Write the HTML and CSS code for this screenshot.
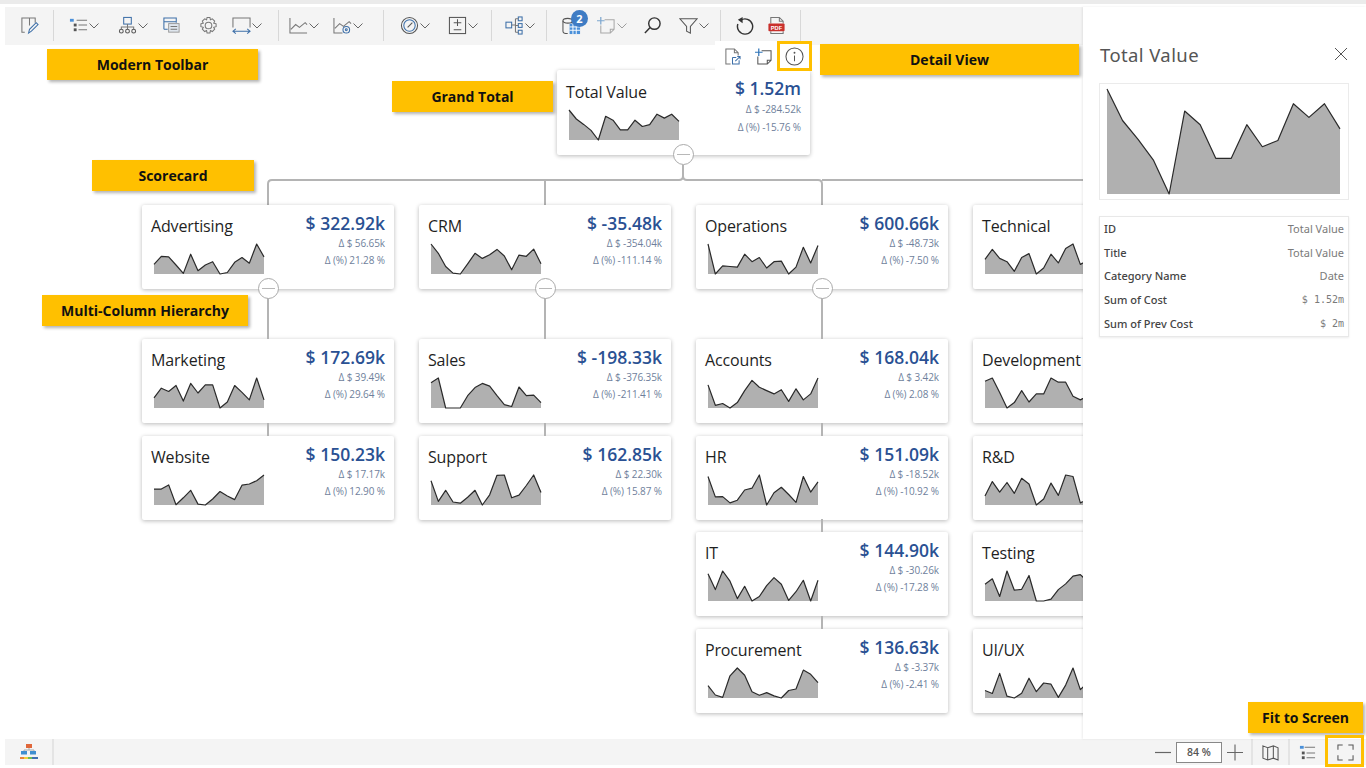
FILE: index.html
```html
<!DOCTYPE html>
<html lang="en">
<head>
<meta charset="utf-8">
<title>Scorecard Hierarchy</title>
<link rel="stylesheet" href="styles.css">
</head>
<body>
<div class="app">
  <div class="topstrip"></div>
  <div class="workspace">
    <div class="left">
      <div class="toolbar">
        <div class="tgroup g1">
          <span class="tool"><svg class="ic" viewBox="0 0 20 20"><path class="gr" d="M5 17H2V2h14v5M10 2v8"/><path class="bl" d="M9 18l1-4 7-7 2 2-7 7z"/></svg></span>
        </div>
        <div class="tgroup g2">
          <span class="tool w49"><svg class="ic" viewBox="0 0 20 20"><rect x="1" y="3" width="4" height="3" fill="#4a90d9"/><rect x="5" y="8" width="3" height="3" fill="#555"/><rect x="5" y="13" width="3" height="3" fill="#555"/><path class="gr" d="M8 4.500h11M10 9.500h9M10 14.500h9"/></svg><svg class="chev" viewBox="0 0 10 6"><path d="M.5.500 5 5 9.500.5"/></svg></span>
          <span class="tool w44"><svg class="ic" viewBox="0 0 20 20"><rect class="bl" x="6" y="1.500" width="8" height="7"/><path class="gr" d="M10 8.500v3M3.500 14v-2.500h13V14M10 11.500V14"/><circle class="dk" cx="3.500" cy="16" r="2"/><circle class="dk" cx="10" cy="16" r="2"/><circle class="dk" cx="16.500" cy="16" r="2"/></svg><svg class="chev" viewBox="0 0 10 6"><path d="M.5.500 5 5 9.500.5"/></svg></span>
          <span class="tool w37"><svg class="ic" viewBox="0 0 20 20"><path class="bl" d="M2 14V2h13v5M2 6h13M6 14H2"/><rect x="7" y="8" width="11" height="9" fill="#dfe6ee" stroke="#999"/><path class="gr" d="M9 11h7M9 14h7"/></svg></span>
          <span class="tool w33"><svg class="ic" viewBox="0 0 20 20"><circle class="gr" cx="10" cy="10" r="3.500"/><path class="gr" d="M8.500 1.500h3l.5 2.500 2-1 2.500 2.500-1 2 2.500.7v3l-2.500.7 1 2-2.500 2.500-2-1-.5 2.500h-3l-.5-2.500-2 1-2.500-2.500 1-2-2.500-.7v-3l2.500-.7-1-2L6 3l2 1z"/></svg></span>
          <span class="tool"><svg class="ic" viewBox="0 0 20 20"><path class="gr" d="M1 12V2h18v10"/><path class="bl" d="M1 16h18M4 13.500 1 16l3 2.500M16 13.500l3 2.500-3 2.500"/></svg><svg class="chev" viewBox="0 0 10 6"><path d="M.5.500 5 5 9.500.5"/></svg></span>
        </div>
        <div class="tgroup g3">
          <span class="tool w44b"><svg class="ic" viewBox="0 0 20 20"><path class="gr" d="M1 2v16h18M2 14l5-5 4 3 6-5 2 2"/></svg><svg class="chev" viewBox="0 0 10 6"><path d="M.5.500 5 5 9.500.5"/></svg></span>
          <span class="tool"><svg class="ic" viewBox="0 0 20 20"><path class="gr" d="M1 2v16h9M2 13l5-5 4 3 6-5 2 2"/><circle class="bl" cx="14" cy="14.500" r="3.500"/><circle class="bl" cx="14" cy="14.500" r="1"/></svg><svg class="chev" viewBox="0 0 10 6"><path d="M.5.500 5 5 9.500.5"/></svg></span>
        </div>
        <div class="tgroup g4">
          <span class="tool w48"><svg class="ic" viewBox="0 0 20 20"><circle class="dk" cx="10" cy="10" r="8.500"/><circle class="bl" cx="10" cy="10" r="6"/><path class="dk" d="M8 12l5-5"/></svg><svg class="chev" viewBox="0 0 10 6"><path d="M.5.500 5 5 9.500.5"/></svg></span>
          <span class="tool"><svg class="ic" viewBox="0 0 20 20"><rect class="dk" x="1.500" y="1.500" width="17" height="17"/><path class="dk" d="M6 7h8M10 3.500v7M6 14.500h8"/></svg><svg class="chev" viewBox="0 0 10 6"><path d="M.5.500 5 5 9.500.5"/></svg></span>
        </div>
        <div class="tgroup g5">
          <span class="tool"><svg class="ic" viewBox="0 0 20 20"><rect class="bl" x="1" y="6.500" width="6" height="6"/><rect class="bl" x="14" y="1" width="4" height="4"/><rect class="bl" x="14" y="8" width="4" height="4"/><rect class="bl" x="14" y="15" width="4" height="4"/><path class="gr" d="M7 9.500h4M11 3v14M11 3h3M11 10h3M11 17h3"/></svg><svg class="chev" viewBox="0 0 10 6"><path d="M.5.500 5 5 9.500.5"/></svg></span>
        </div>
        <div class="tgroup g6">
          <span class="tool w35"><svg class="ic" viewBox="0 0 20 20"><ellipse class="dk" cx="6" cy="5" rx="5" ry="2.500"/><path class="dk" d="M1 5v11c0 1.500 2 2.500 5 2.500M11 5v3"/><rect x="8" y="8" width="11" height="11" fill="#4a90d9"/><path d="M8 11.500h11M8 15h11M11.500 8v11M15 8v11" stroke="#fff" stroke-width="1"/></svg></span>
          <span class="tool w48c muted"><svg class="ic" viewBox="0 0 20 20"><path class="gr" d="M8 4h10v10l-4 4H4V10M18 14h-4v4"/><path class="plus" d="M0 5h8M4 1v8"/></svg><svg class="chev" viewBox="0 0 10 6"><path d="M.5.500 5 5 9.500.5"/></svg></span>
          <span class="tool w34"><svg class="ic" viewBox="0 0 20 20"><circle class="dkb" cx="12" cy="8" r="6"/><path class="dkb" d="M7.500 12 2 18"/></svg></span>
          <span class="tool"><svg class="ic" viewBox="0 0 20 20"><path class="dk" d="M1 3h18l-7 8v7l-4-2v-5z"/></svg><svg class="chev" viewBox="0 0 10 6"><path d="M.5.500 5 5 9.500.5"/></svg></span>
        </div>
        <div class="tgroup g7">
          <span class="tool w32"><svg class="ic" viewBox="0 0 20 20"><path class="dkb" d="M6 4.500a8 8 0 1 1-3 4"/><path class="dkf" d="M8 1v6.500L3 4z"/></svg></span>
          <span class="tool"><svg class="ic" viewBox="0 0 20 20"><path class="gr" d="M4 8V1.500h9l4 4V8M13 1.500v4h4M4 16v2.500h13V16"/><rect x="1.500" y="8" width="17" height="8" rx="1" fill="#c9302c"/><text class="pdf" x="10" y="14.300">PDF</text></svg></span>
        </div>
      </div>

      <div class="canvas">
        <svg class="links" viewBox="0 0 1083 160"><path d="M683 120v11q0 4-4 4H272q-4 0-4 4v21M683 131q0 4 4 4h131q4 0 4 4v21M545 135q0 0 0 4v21M822 135h261"/></svg>

        <div class="card grand">
          <div class="lhs">
            <div class="name">Total Value</div>
            <svg class="spark" viewBox="0 0 150 100" preserveAspectRatio="none"><polygon class="area" points="0,100 0,0 10,30 20,48 30,68 40,100 50,21 60,34 70,66 80,66 90,34 100,55 110,49 120,14 130,27 140,14 150,38 150,100"/><polyline class="line" points="0,0 10,30 20,48 30,68 40,100 50,21 60,34 70,66 80,66 90,34 100,55 110,49 120,14 130,27 140,14 150,38"/></svg>
          </div>
          <div class="rhs">
            <div class="val">$ 1.52m</div>
            <div class="sub">Δ $ -284.52k</div>
            <div class="sub">Δ (%) -15.76 %</div>
          </div>
          <span class="toggle"></span>
        </div>

        <div class="branches">
          <div class="column">
            <div class="card">
              <div class="lhs"><div class="name">Advertising</div>
                <svg class="spark" viewBox="0 0 150 100" preserveAspectRatio="none"><polygon class="area" points="0,100 0,68 10,41 20,43 30,70 40,98 50,34 60,89 70,70 80,59 90,100 100,95 110,61 120,45 130,64 140,0 150,43 150,100"/><polyline class="line" points="0,68 10,41 20,43 30,70 40,98 50,34 60,89 70,70 80,59 90,100 100,95 110,61 120,45 130,64 140,0 150,43"/></svg></div>
              <div class="rhs"><div class="val">$ 322.92k</div><div class="sub">Δ $ 56.65k</div><div class="sub">Δ (%) 21.28 %</div></div>
              <span class="toggle"></span>
            </div>
            <div class="children">
              <div class="card linked">
                <div class="lhs"><div class="name">Marketing</div>
                  <svg class="spark" viewBox="0 0 150 100" preserveAspectRatio="none"><polygon class="area" points="0,100 0,66 10,34 20,45 30,25 40,77 50,18 60,50 70,23 80,23 90,100 100,80 110,25 120,48 130,73 140,0 150,73 150,100"/><polyline class="line" points="0,66 10,34 20,45 30,25 40,77 50,18 60,50 70,23 80,23 90,100 100,80 110,25 120,48 130,73 140,0 150,73"/></svg></div>
                <div class="rhs"><div class="val">$ 172.69k</div><div class="sub">Δ $ 39.49k</div><div class="sub">Δ (%) 29.64 %</div></div>
              </div>
              <div class="card linked">
                <div class="lhs"><div class="name">Website</div>
                  <svg class="spark" viewBox="0 0 150 100" preserveAspectRatio="none"><polygon class="area" points="0,100 0,47 10,47 20,33 30,99 40,76 50,51 60,97 70,100 80,80 90,55 100,70 110,82 120,34 130,30 140,19 150,0 150,100"/><polyline class="line" points="0,47 10,47 20,33 30,99 40,76 50,51 60,97 70,100 80,80 90,55 100,70 110,82 120,34 130,30 140,19 150,0"/></svg></div>
                <div class="rhs"><div class="val">$ 150.23k</div><div class="sub">Δ $ 17.17k</div><div class="sub">Δ (%) 12.90 %</div></div>
              </div>
            </div>
          </div>

          <div class="column">
            <div class="card">
              <div class="lhs"><div class="name">CRM</div>
                <svg class="spark" viewBox="0 0 150 100" preserveAspectRatio="none"><polygon class="area" points="0,100 0,0 10,31 20,75 30,97 40,100 50,66 60,31 70,48 80,36 90,18 100,40 110,86 120,37 130,41 140,17 150,66 150,100"/><polyline class="line" points="0,0 10,31 20,75 30,97 40,100 50,66 60,31 70,48 80,36 90,18 100,40 110,86 120,37 130,41 140,17 150,66"/></svg></div>
              <div class="rhs"><div class="val">$ -35.48k</div><div class="sub">Δ $ -354.04k</div><div class="sub">Δ (%) -111.14 %</div></div>
              <span class="toggle"></span>
            </div>
            <div class="children">
              <div class="card linked">
                <div class="lhs"><div class="name">Sales</div>
                  <svg class="spark" viewBox="0 0 150 100" preserveAspectRatio="none"><polygon class="area" points="0,100 0,16 10,0 20,100 30,100 40,100 50,59 60,32 70,18 80,27 90,59 100,89 110,95 120,30 130,59 140,57 150,82 150,100"/><polyline class="line" points="0,16 10,0 20,100 30,100 40,100 50,59 60,32 70,18 80,27 90,59 100,89 110,95 120,30 130,59 140,57 150,82"/></svg></div>
                <div class="rhs"><div class="val">$ -198.33k</div><div class="sub">Δ $ -376.35k</div><div class="sub">Δ (%) -211.41 %</div></div>
              </div>
              <div class="card linked">
                <div class="lhs"><div class="name">Support</div>
                  <svg class="spark" viewBox="0 0 150 100" preserveAspectRatio="none"><polygon class="area" points="0,100 0,19 10,88 20,51 30,90 40,94 50,74 60,51 70,100 80,66 90,1 100,0 110,76 120,67 130,35 140,0 150,58 150,100"/><polyline class="line" points="0,19 10,88 20,51 30,90 40,94 50,74 60,51 70,100 80,66 90,1 100,0 110,76 120,67 130,35 140,0 150,58"/></svg></div>
                <div class="rhs"><div class="val">$ 162.85k</div><div class="sub">Δ $ 22.30k</div><div class="sub">Δ (%) 15.87 %</div></div>
              </div>
            </div>
          </div>

          <div class="column">
            <div class="card">
              <div class="lhs"><div class="name">Operations</div>
                <svg class="spark" viewBox="0 0 150 100" preserveAspectRatio="none"><polygon class="area" points="0,100 0,0 10,100 20,73 30,75 40,77 50,34 60,59 70,45 80,80 90,59 100,57 110,100 120,77 130,11 140,63 150,5 150,100"/><polyline class="line" points="0,0 10,100 20,73 30,75 40,77 50,34 60,59 70,45 80,80 90,59 100,57 110,100 120,77 130,11 140,63 150,5"/></svg></div>
              <div class="rhs"><div class="val">$ 600.66k</div><div class="sub">Δ $ -48.73k</div><div class="sub">Δ (%) -7.50 %</div></div>
              <span class="toggle"></span>
            </div>
            <div class="children">
              <div class="card linked">
                <div class="lhs"><div class="name">Accounts</div>
                  <svg class="spark" viewBox="0 0 150 100" preserveAspectRatio="none"><polygon class="area" points="0,100 0,23 10,91 20,85 30,100 40,82 50,42 60,8 70,31 80,42 90,53 100,39 110,78 120,36 130,73 140,53 150,0 150,100"/><polyline class="line" points="0,23 10,91 20,85 30,100 40,82 50,42 60,8 70,31 80,42 90,53 100,39 110,78 120,36 130,73 140,53 150,0"/></svg></div>
                <div class="rhs"><div class="val">$ 168.04k</div><div class="sub">Δ $ 3.42k</div><div class="sub">Δ (%) 2.08 %</div></div>
              </div>
              <div class="card linked">
                <div class="lhs"><div class="name">HR</div>
                  <svg class="spark" viewBox="0 0 150 100" preserveAspectRatio="none"><polygon class="area" points="0,100 0,5 10,73 20,72 30,93 40,84 50,50 60,44 70,0 80,100 90,59 100,41 110,65 120,91 130,5 140,57 150,23 150,100"/><polyline class="line" points="0,5 10,73 20,72 30,93 40,84 50,50 60,44 70,0 80,100 90,59 100,41 110,65 120,91 130,5 140,57 150,23"/></svg></div>
                <div class="rhs"><div class="val">$ 151.09k</div><div class="sub">Δ $ -18.52k</div><div class="sub">Δ (%) -10.92 %</div></div>
              </div>
              <div class="card linked">
                <div class="lhs"><div class="name">IT</div>
                  <svg class="spark" viewBox="0 0 150 100" preserveAspectRatio="none"><polygon class="area" points="0,100 0,9 10,62 20,0 30,34 40,92 50,51 60,100 70,85 80,49 90,22 100,44 110,98 120,69 130,31 140,100 150,31 150,100"/><polyline class="line" points="0,9 10,62 20,0 30,34 40,92 50,51 60,100 70,85 80,49 90,22 100,44 110,98 120,69 130,31 140,100 150,31"/></svg></div>
                <div class="rhs"><div class="val">$ 144.90k</div><div class="sub">Δ $ -30.26k</div><div class="sub">Δ (%) -17.28 %</div></div>
              </div>
              <div class="card linked">
                <div class="lhs"><div class="name">Procurement</div>
                  <svg class="spark" viewBox="0 0 150 100" preserveAspectRatio="none"><polygon class="area" points="0,100 0,59 10,90 20,98 30,26 40,0 50,24 60,79 70,91 80,82 90,93 100,100 110,75 120,70 130,7 140,21 150,49 150,100"/><polyline class="line" points="0,59 10,90 20,98 30,26 40,0 50,24 60,79 70,91 80,82 90,93 100,100 110,75 120,70 130,7 140,21 150,49"/></svg></div>
                <div class="rhs"><div class="val">$ 136.63k</div><div class="sub">Δ $ -3.37k</div><div class="sub">Δ (%) -2.41 %</div></div>
              </div>
            </div>
          </div>

          <div class="column">
            <div class="card">
              <div class="lhs"><div class="name">Technical</div>
                <svg class="spark" viewBox="0 0 150 100" preserveAspectRatio="none"><polygon class="area" points="0,100 0,51 10,18 20,48 30,59 40,91 50,45 60,32 70,100 80,80 90,34 100,63 110,15 120,0 130,68 140,55 150,40 150,100"/><polyline class="line" points="0,51 10,18 20,48 30,59 40,91 50,45 60,32 70,100 80,80 90,34 100,63 110,15 120,0 130,68 140,55 150,40"/></svg></div>
              <span class="toggle"></span>
            </div>
            <div class="children">
              <div class="card linked">
                <div class="lhs"><div class="name">Development</div>
                  <svg class="spark" viewBox="0 0 150 100" preserveAspectRatio="none"><polygon class="area" points="0,100 0,11 10,0 20,48 30,100 40,82 50,42 60,80 70,53 80,53 90,0 100,14 110,14 120,61 130,73 140,60 150,50 150,100"/><polyline class="line" points="0,11 10,0 20,48 30,100 40,82 50,42 60,80 70,53 80,53 90,0 100,14 110,14 120,61 130,73 140,60 150,50"/></svg></div>
              </div>
              <div class="card linked">
                <div class="lhs"><div class="name">R&amp;D</div>
                  <svg class="spark" viewBox="0 0 150 100" preserveAspectRatio="none"><polygon class="area" points="0,100 0,70 10,22 20,57 30,25 40,61 50,11 60,30 70,100 80,80 90,27 100,68 110,0 120,5 130,93 140,82 150,60 150,100"/><polyline class="line" points="0,70 10,22 20,57 30,25 40,61 50,11 60,30 70,100 80,80 90,27 100,68 110,0 120,5 130,93 140,82 150,60"/></svg></div>
              </div>
              <div class="card linked">
                <div class="lhs"><div class="name">Testing</div>
                  <svg class="spark" viewBox="0 0 150 100" preserveAspectRatio="none"><polygon class="area" points="0,100 0,44 10,26 20,85 30,0 40,64 50,61 60,15 70,100 80,100 90,94 100,62 110,43 120,17 130,12 140,35 150,50 150,100"/><polyline class="line" points="0,44 10,26 20,85 30,0 40,64 50,61 60,15 70,100 80,100 90,94 100,62 110,43 120,17 130,12 140,35 150,50"/></svg></div>
              </div>
              <div class="card linked">
                <div class="lhs"><div class="name">UI/UX</div>
                  <svg class="spark" viewBox="0 0 150 100" preserveAspectRatio="none"><polygon class="area" points="0,100 0,75 10,85 20,18 30,94 40,100 50,84 60,34 70,79 80,50 90,54 100,98 110,57 120,0 130,72 140,49 150,61 150,100"/><polyline class="line" points="0,75 10,85 20,18 30,94 40,100 50,84 60,34 70,79 80,50 90,54 100,98 110,57 120,0 130,72 140,49 150,61"/></svg></div>
              </div>
            </div>
          </div>
        </div>
      </div>
    </div>

    <aside class="panel">
      <div class="panel-head">
        <span class="panel-title">Total Value</span>
        <svg class="close" viewBox="0 0 14 14"><path d="M1 1l12 12M13 1 1 13"/></svg>
      </div>
      <div class="panel-chart">
        <svg class="bigspark" viewBox="0 0 150 100" preserveAspectRatio="none"><polygon class="area" points="0,100 0,0 10,30 20,48 30,68 40,100 50,21 60,34 70,66 80,66 90,34 100,55 110,49 120,14 130,27 140,14 150,38 150,100"/><polyline class="line" points="0,0 10,30 20,48 30,68 40,100 50,21 60,34 70,66 80,66 90,34 100,55 110,49 120,14 130,27 140,14 150,38"/></svg>
      </div>
      <div class="panel-table">
        <div class="prow"><span class="pk">ID</span><span class="pv">Total Value</span></div>
        <div class="prow"><span class="pk">Title</span><span class="pv">Total Value</span></div>
        <div class="prow"><span class="pk">Category Name</span><span class="pv">Date</span></div>
        <div class="prow"><span class="pk">Sum of Cost</span><span class="pv mono">$ 1.52m</span></div>
        <div class="prow"><span class="pk">Sum of Prev Cost</span><span class="pv mono">$ 2m</span></div>
      </div>
    </aside>
  </div>

  <div class="statusbar">
    <div class="scell logo">
      <svg class="logoic" viewBox="0 0 18 16"><rect x="6" y="0" width="6" height="4" fill="#e0673a"/><path d="M9 4v2M4 8V6h10v2" stroke="#aaa" fill="none"/><rect x="1" y="7" width="6" height="3.500" fill="#3f8fd0"/><rect x="10" y="7" width="6" height="3.500" fill="#3f8fd0"/><rect x="0" y="13" width="4" height="2" fill="#e8823a"/><rect x="4" y="13" width="4" height="2" fill="#f2cf3b"/><rect x="8" y="13" width="4" height="2" fill="#6dbb54"/><rect x="12" y="13" width="6" height="2" fill="#3f6fb0"/></svg>
    </div>
    <div class="sspacer"></div>
    <div class="zoom">
      <svg class="zi minus" viewBox="0 0 16 17"><path d="M0 8.500h16"/></svg>
      <span class="zoombox">84 %</span>
      <svg class="zi plusz" viewBox="0 0 17 17"><path d="M0 8.500h17M8.500 0v17"/></svg>
    </div>
    <div class="scell map"><svg class="si" viewBox="0 0 18 18"><path class="dk" d="M1 2l5 2 6-2 5 2v13l-5-2-6 2-5-2zM6 4v13M12 2v13"/></svg></div>
    <div class="scell list"><svg class="si" viewBox="0 0 18 18"><rect x="1" y="2" width="4" height="3" fill="#4a90d9"/><rect x="3" y="8" width="3" height="3" fill="#555"/><rect x="3" y="13" width="3" height="3" fill="#555"/><path class="gr" d="M6 3.500h11M8 9.500h9M8 14.500h9"/></svg></div>
    <div class="scell fit"><svg class="si" viewBox="0 0 18 18"><path class="dk" d="M1 6V1h5M12 1h5v5M17 12v5h-5M6 17H1v-5"/></svg></div>
  </div>

  <div class="cardtools">
    <svg class="ci" viewBox="0 0 18 18"><path class="gr" d="M7 17H2V1h9l4 4v3M11 1v4h4"/><path class="bl" d="M9 10h4M9 10v7h7v-4M12 14l5-5M14 9h3v3"/></svg>
    <svg class="ci second" viewBox="0 0 18 18"><path class="dk" d="M7 3h10v10l-4 4H3V9M17 13h-4v4"/><path class="plus" d="M0 4.500h8M4 .5v8"/></svg>
    <span class="infobox"><svg class="infoic" viewBox="0 0 20 20"><circle class="dk" cx="10" cy="10" r="9"/><path class="dk" d="M10 9v6"/><circle cx="10" cy="6" r="1" fill="#555"/></svg></span>
  </div>

  <div class="tag t-toolbar">Modern Toolbar</div>
  <div class="tag t-detail">Detail View</div>
  <div class="tag t-grand">Grand Total</div>
  <div class="tag t-score">Scorecard</div>
  <div class="tag t-hier">Multi-Column Hierarchy</div>
  <div class="tag t-fit">Fit to Screen</div>
  <div class="fitbox"></div>
</div>
</body>
</html>
```
FILE: styles.css
```css
* { box-sizing: border-box; }
html, body { margin: 0; padding: 0; background: #fff; }
body { font-family: "Open Sans", "Noto Sans", sans-serif; color: #222; }
svg { display: block; flex: none; }

.app { position: relative; width: 1366px; height: 768px; overflow: hidden; }
.topstrip { height: 4px; background: #ebebeb; margin-bottom: 3px; }
.workspace { display: flex; height: 732px; }
.left { width: 1083px; flex: none; display: flex; flex-direction: column; }

/* toolbar */
.toolbar { height: 38px; margin-left: 5px; background: #f4f4f4; display: flex; align-items: stretch; flex: none; }
.tgroup { display: flex; align-items: center; height: 31px; margin-top: 3px; border-right: 1px solid #d8d8d8; }
.g1 { width: 49px; padding-left: 15px; }
.g2 { width: 225px; padding-left: 15px; }
.g3 { width: 105px; padding-left: 10px; }
.g4 { width: 108px; padding-left: 16px; }
.g5 { width: 55px; padding-left: 13px; }
.g6 { width: 174px; padding-left: 15px; }
.g7 { width: 80px; padding-left: 14px; }
.tool { display: flex; align-items: center; flex: none; gap: 1px; }
.w49 { width: 49px; } .w44 { width: 44px; } .w37 { width: 37px; } .w33 { width: 33px; }
.w44b { width: 44px; } .w48 { width: 48px; } .w35 { width: 35px; } .w48c { width: 46px; }
.w34 { width: 36px; } .w32 { width: 32px; }
.w35 { position: relative; }
.w35::after { content: "2"; position: absolute; left: 9px; top: -6px; width: 17px; height: 17px; border-radius: 50%; background: #3f7cc4; color: #fff; font-size: 11px; font-weight: 700; line-height: 17px; text-align: center; }
.ic { width: 19px; height: 19px; }
.chev { width: 10px; height: 6px; }
.chev path { fill: none; stroke: #666; stroke-width: 1; }
.muted { opacity: .6; }
.gr, .bl, .dk, .dkb, .plus { fill: none; stroke-width: 1.100; }
.gr { stroke: #777; }
.bl { stroke: #3d6fa8; }
.plus { stroke: #2f74b8; stroke-width: 1.300; }
.dk { stroke: #555; }
.dkb { stroke: #333; stroke-width: 1.500; }
.dkf { fill: #333; }
.pdf { font-family: "Liberation Sans", sans-serif; font-size: 6px; font-weight: 700; fill: #fff; text-anchor: middle; }

/* canvas */
.canvas { position: relative; flex: 1; overflow: hidden; }
.links { position: absolute; left: 0; top: 0; width: 1083px; height: 160px; }
.links path { fill: none; stroke: #b4b4b4; stroke-width: 2; }

.card { position: relative; width: 252px; height: 84px; background: #fff; border-radius: 2px; box-shadow: 0 1px 4px rgba(0,0,0,.28); display: flex; justify-content: space-between; padding: 0 9px; flex: none; }
.grand { margin: 25px 0 0 557px; width: 253px; height: 85px; }
.lhs { display: flex; flex-direction: column; }
.name { font-size: 16px; line-height: 24px; margin-top: 9px; color: #1f1f1f; white-space: nowrap; letter-spacing: -.15px; }
.grand .name { margin-top: 10px; }
.spark { width: 110px; height: 30px; margin: 6px 0 0 3px; overflow: visible; }
.area { fill: #b0b0b0; stroke: none; }
.line { fill: none; stroke: #2a2a2a; stroke-width: 1.200; vector-effect: non-scaling-stroke; stroke-linejoin: round; }
.rhs { text-align: right; padding-top: 6px; }
.val { font-size: 17.500px; font-weight: 600; line-height: 24px; color: #2a5193; white-space: nowrap; }
.sub { font-size: 10px; line-height: 17px; color: #6f7f9c; white-space: nowrap; letter-spacing: -.1px; }
.grand .sub { line-height: 18px; }
.toggle { position: absolute; left: 50%; bottom: -10px; margin-left: -10.500px; width: 21px; height: 21px; border-radius: 50%; background: #fff; border: 1px solid #aaa; z-index: 2; }
.toggle::after { content: ""; position: absolute; left: 3px; right: 3px; top: 9px; height: 1px; background: #b8b8b8; }

.branches { display: flex; gap: 25px; margin-top: 50px; padding-left: 142px; width: 1400px; }
.column { width: 252px; flex: none; display: flex; flex-direction: column; }
.children { display: flex; flex-direction: column; gap: 12.500px; margin-top: 50px; }
.linked::before { content: ""; position: absolute; left: 50%; top: -13px; height: 13px; width: 2px; margin-left: -1px; background: #b4b4b4; }
.children .linked:first-child::before { top: -50px; height: 50px; }

/* panel */
.panel { position: relative; z-index: 3; width: 283px; flex: none; background: #fff; box-shadow: -1px 0 2px rgba(0,0,0,.08); padding: 0 17px 0 16px; font-family: "Noto Sans", "Open Sans", sans-serif; }
.panel-head { display: flex; align-items: center; justify-content: space-between; height: 76px; padding: 18px 1px 0; }
.panel-title { font-size: 18.500px; color: #555; letter-spacing: .4px; }
.close { width: 14px; height: 14px; }
.close path { fill: none; stroke: #555; stroke-width: 1; }
.panel-chart { height: 117px; border: 1px solid #ebebeb; padding: 5px 8px 5px 7px; }
.bigspark { width: 233px; height: 105px; overflow: visible; }
.panel-table { margin-top: 16px; height: 121px; border: 1px solid #e8e8e8; box-shadow: 0 1px 2px rgba(0,0,0,.08); padding: 0 4px; display: flex; flex-direction: column; justify-content: space-around; }
.prow { display: flex; justify-content: space-between; font-size: 11px; line-height: 18px; }
.pk { color: #444; font-weight: 500; }
.pv { color: #7a7a7a; }
.mono { font-family: "DejaVu Sans Mono", "Liberation Mono", monospace; font-size: 10px; }

/* status */
.statusbar { height: 26px; margin-left: 5px; background: #f4f4f4; display: flex; align-items: center; }
.scell { height: 100%; display: flex; align-items: center; justify-content: center; flex: none; }
.logo { width: 49px; border-right: 2px solid #e4e4e4; }
.logoic { width: 18px; height: 16px; }
.sspacer { flex: 1; }
.zoom { display: flex; align-items: center; height: 100%; border-right: 2px solid #e4e4e4; width: 98px; flex: none; }
.zi { width: 16px; height: 17px; }
.zi path { fill: none; stroke: #666; stroke-width: 1.200; }
.zoombox { width: 46px; height: 21px; margin: 0 5px; border: 1px solid #888; background: #fff; text-align: center; font-size: 10.500px; line-height: 19px; color: #555; font-weight: 600; flex: none; }
.map { width: 37px; border-right: 2px solid #e4e4e4; }
.list { width: 35px; }
.fit { width: 41px; }
.si { width: 17px; height: 17px; }

/* overlays */
.cardtools { position: absolute; left: 715px; top: 41px; width: 97px; height: 30px; background: #fff; display: flex; align-items: center; padding-left: 9px; z-index: 2; }
.ci { width: 17px; height: 17px; }
.second { margin-left: 14px; }
.infobox { width: 35px; height: 30px; flex: none; border: 3px solid #ffc000; display: flex; align-items: center; justify-content: center; margin-left: 5px; }
.infoic { width: 19px; height: 19px; }
.tag { position: absolute; height: 31px; background: #ffc000; box-shadow: 2px 2px 3px rgba(0,0,0,.3); font-weight: 700; font-size: 14px; line-height: 31px; text-align: center; color: #111; z-index: 4; white-space: nowrap; }
.t-toolbar { left: 47px; top: 49px; width: 211px; }
.t-detail { left: 820px; top: 44px; width: 259px; }
.t-grand { left: 392px; top: 81px; width: 161px; }
.t-score { left: 92px; top: 160px; width: 162px; }
.t-hier { left: 42px; top: 295px; width: 206px; }
.t-fit { left: 1248px; top: 702px; width: 115px; }
.fitbox { position: absolute; left: 1325px; top: 735px; width: 39px; height: 32px; border: 3px solid #ffc000; z-index: 4; }
```
